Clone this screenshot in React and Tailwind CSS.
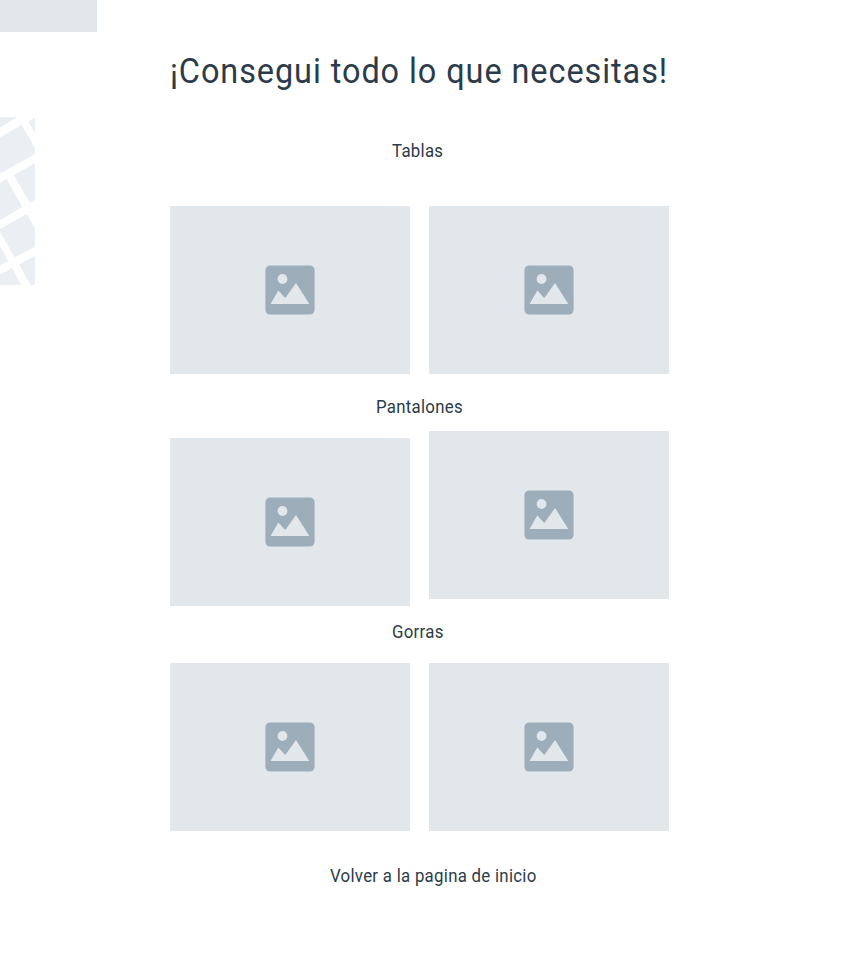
function Placeholder({ className = "" }) {
  return (
    <div className={`flex h-[168px] w-[240px] items-center justify-center bg-[#e2e7eb] ${className}`}>
      <svg width="50" height="50" viewBox="0 0 50 50">
        <rect x="0.4" y="0.4" width="49.2" height="49.2" rx="5" fill="#9eadba" />
        <circle cx="17.5" cy="14" r="4.9" fill="#e2e7eb" />
        <path d="M5.5 39 L13.3 25.5 L20.3 33 L31 18 L44.3 39 Z" fill="#e2e7eb" />
      </svg>
    </div>
  );
}

function MapTile() {
  return (
    <svg className="mt-[85px]" width="35" height="168" viewBox="0 21 105 504" fill="#ebeff4">
      <path d="M0 21H52L0 53Z" />
      <path d="M0 82L65 44L105 115V132L0 191Z" />
      <path d="M85 35L105 22V68Z" />
      <path d="M0 218L20 207L67 291L0 331Z" />
      <path d="M41 196L105 159V270L90 279Z" />
      <path d="M102 300L105 298V305Z" />
      <path d="M0 357L80 312L105 355V410L44 442L0 366Z" />
      <path d="M0 408L25 453L0 467Z" />
      <path d="M0 494L36 474L65 525H0Z" />
      <path d="M57 464L105 437V525H92Z" />
    </svg>
  );
}

function Label({ children }) {
  return (
    <span className="inline-block origin-left scale-x-[0.934] tracking-[0.3px] whitespace-nowrap">
      {children}
    </span>
  );
}

export default function App() {
  return (
    <div className="flex h-[972px] w-[854px] overflow-hidden bg-white font-['Roboto',sans-serif] text-[18px] leading-[24px] text-[#2c3b49]">
      <aside className="w-[170px] shrink-0">
        <div className="h-[32px] w-[97px] bg-[#e2e7eb]" />
        <MapTile />
      </aside>
      <main className="flex w-[499px] shrink-0 flex-col">
        <h1 className="mt-[48px] h-[48px] text-[35px] leading-[48px] whitespace-nowrap">
          <span className="inline-block origin-left scale-x-[0.927] tracking-[1px]">¡Consegui todo lo que necesitas!</span>
        </h1>
        <h2 className="mt-[43px] ml-[222px] h-[24px]"><Label>Tablas</Label></h2>
        <div className="mt-[43px] flex justify-between">
          <Placeholder />
          <Placeholder />
        </div>
        <h2 className="mt-[21px] ml-[206px] h-[24px]"><Label>Pantalones</Label></h2>
        <div className="mt-[12px] flex items-start justify-between">
          <Placeholder className="mt-[7px]" />
          <Placeholder />
        </div>
        <h2 className="mt-[14px] ml-[222px] h-[24px]"><Label>Gorras</Label></h2>
        <div className="mt-[19px] flex justify-between">
          <Placeholder />
          <Placeholder />
        </div>
        <a className="mt-[33px] ml-[160px]"><Label>Volver a la pagina de inicio</Label></a>
      </main>
    </div>
  );
}
